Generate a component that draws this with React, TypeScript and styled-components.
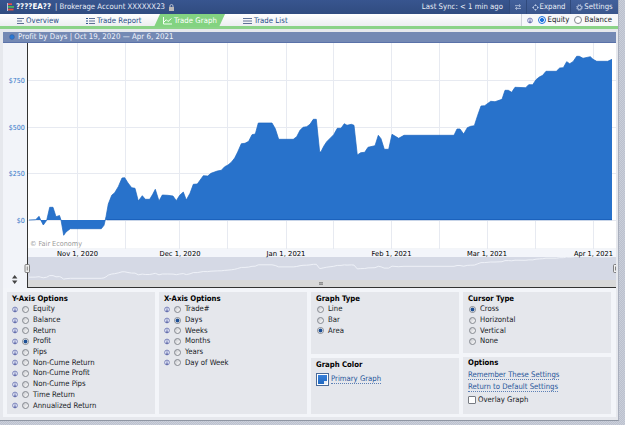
import type { ReactNode } from 'react';
import styled, { createGlobalStyle } from 'styled-components';

const GlobalStyle = createGlobalStyle`
  * {
    box-sizing: border-box;
  }

  body {
    margin: 0;
    overflow: hidden;
    background: conic-gradient(#bcc1ce 25%, #cacfda 0 50%, #bcc1ce 0 75%, #cacfda 0)
      0 0 / 2px 2px;
    color: #15181d;
    font-family: 'DejaVu Sans Condensed', 'DejaVu Sans', sans-serif;
    font-stretch: condensed;
    font-size: 7.7px;
    line-height: 10px;
    white-space: nowrap;
  }
`;

const Page = styled.div`
  width: 625px;
  height: 425px;
  overflow: hidden;
`;

const Window = styled.main`
  display: flex;
  flex-direction: column;
  width: 619px;
  height: 421px;
  border-right: 1px solid #a9afbd;
  border-bottom: 1px solid #8f96a3;
  background: #e6e8ed;
`;

const Header = styled.header`
  display: flex;
  align-items: center;
  height: 14px;
  flex: none;
  padding-left: 7px;
  background: linear-gradient(#38558f, #304c80);
  color: #e9eef8;
`;

const AccountName = styled.b`
  width: 39px;
  margin-left: 2px;
  color: #fff;
  font-size: 7.9px;
`;

const Account = styled.span`
  width: 114px;
  letter-spacing: 0.02px;
`;

const Sync = styled.span`
  margin-left: auto;
  padding-right: 6px;
  letter-spacing: 0.03px;
`;

const HeaderAction = styled.button<{ $width: number }>`
  display: flex;
  align-items: center;
  justify-content: center;
  gap: 1px;
  width: ${({ $width }) => $width}px;
  height: 14px;
  padding: 0;
  border: 0;
  border-left: 1px solid #304a7c;
  background: linear-gradient(#42609b, #3a568c);
  color: #e9eef8;
  font: inherit;
`;

const TabBar = styled.nav`
  display: flex;
  height: 15px;
  flex: none;
  border-bottom: 3px solid #8bd388;
  background: linear-gradient(#fff, #eceef1);
  color: #264c87;
`;

const Tab = styled.a<{ $width: number; $pad: number; $active?: boolean }>`
  display: flex;
  align-items: center;
  gap: 2px;
  width: ${({ $width }) => $width}px;
  height: 13px;
  padding-left: ${({ $pad }) => $pad}px;
  background: ${({ $active }) => ($active ? '#83d381' : 'none')};
  clip-path: ${({ $active }) =>
    $active ? 'polygon(6px 0, 100% 0, calc(100% - 6px) 100%, 0 100%)' : 'none'};
  color: ${({ $active }) => ($active ? '#fff' : 'inherit')};
  letter-spacing: 0.06px;
`;

const Modes = styled.div`
  display: flex;
  align-items: center;
  height: 12px;
  margin-left: auto;
  padding: 0 6px 0 5px;
  border-left: 1px solid #cfd3da;
  background: #f7f8fa;
  color: #15181d;
`;

const ModeLabel = styled.label`
  display: flex;
  align-items: center;
  gap: 2px;
  margin-left: 5px;
`;

const TitleBar = styled.h1`
  display: flex;
  align-items: center;
  gap: 3px;
  height: 11px;
  flex: none;
  margin: 3px 2px 0 3px;
  padding-left: 6px;
  border-bottom: 1px solid #5a72a9;
  background: #7489b4;
  color: #f1f4fb;
  font-size: 7.8px;
  font-weight: 400;
  letter-spacing: 0.04px;
`;

const ChartArea = styled.section`
  height: 245px;
  flex: none;
  margin: 0 2px 0 3px;
  background: #fff;

  svg {
    display: block;
  }
`;

const OptionsArea = styled.section`
  display: grid;
  grid-template-columns: repeat(4, 148px);
  column-gap: 4px;
  height: 129px;
  flex: none;
  margin: 0 2px 0 3px;
  padding: 4px 5px 3px 4px;
  background: #f3f5f9;
`;

const Column = styled.div`
  display: flex;
  flex-direction: column;
  gap: 4px;
`;

const Panel = styled.section<{ $height?: number; $top?: number }>`
  ${({ $height }) => ($height ? `height: ${$height}px;` : 'flex: 1;')}
  padding: ${({ $top = 1 }) => $top}px 5px 0;
  background: #e5e7ec;
`;

const PanelTitle = styled.h2`
  height: 11px;
  margin: 0;
  color: #000;
  font-size: 7.7px;
  line-height: 11px;
`;

const Option = styled.label`
  display: flex;
  align-items: center;
  height: 10.7px;
`;

const RadioDot = styled.span<{ $checked?: boolean; $blue?: boolean }>`
  display: block;
  width: ${({ $blue }) => ($blue ? 8 : 7)}px;
  height: ${({ $blue }) => ($blue ? 8 : 7)}px;
  margin: ${({ $blue }) => ($blue ? '0' : '0 4px 0 1px')};
  border: 1px solid ${({ $blue, $checked }) => ($blue && $checked ? '#1d72dd' : '#858990')};
  border-radius: 50%;
  background: ${({ $checked, $blue }) =>
    $checked
      ? `radial-gradient(circle, ${$blue ? '#1d72dd' : '#1d4f94'} 0 1.6px, #f6f7f9 2.3px)`
      : $blue
        ? '#fff'
        : 'linear-gradient(135deg, #c4c6cc, #fff)'};
`;

const SettingLink = styled.a`
  display: block;
  width: fit-content;
  height: 9px;
  margin-bottom: 3px;
  border-bottom: 1px dotted #5d80b5;
  color: #28569a;
  font-size: 7.7px;
  line-height: 8px;
`;

const Links = styled.div`
  padding-top: 3px;
`;

const ColorRow = styled.div`
  display: flex;
  align-items: center;
  gap: 2px;
  margin-top: 3px;

  ${SettingLink} {
    margin: 0;
  }
`;

const Swatch = styled.span`
  display: flex;
  align-items: flex-end;
  justify-content: flex-end;
  width: 13px;
  height: 13px;
  padding: 1px;
  border: 1px solid #4b6b99;
  background: linear-gradient(#3b82dc, #1c65bd);
  box-shadow: inset 0 0 0 1px #fff;

  &::after {
    width: 3px;
    height: 3px;
    background: #e7edf5;
    content: '';
  }
`;

const Check = styled.span`
  width: 8px;
  height: 8px;
  margin-right: 2px;
  border: 1px solid #777b82;
  border-radius: 1px;
  background: #fff;
`;

const InfoIcon = () => (
  <svg width="6" height="7" viewBox="0 0 6 7">
    <circle cx="3" cy="3.5" r="2.4" fill="#e4e8f8" stroke="#747db7" strokeWidth="0.9" />
    <path d="M3 1.8v.8M3 3.2v2M2.2 5.2h1.6" stroke="#38458f" strokeWidth="0.8" />
  </svg>
);

const ListIcon = ({ bullets, width = 9 }: { bullets?: boolean; width?: number }) => (
  <svg width={width} height="8" viewBox={`0 0 ${width} 8`} stroke="#5e7096">
    <path d={bullets ? 'M3 1.5h6M3 4h6M3 6.5h6' : `M0 1.5h${width}M0 4h${width === 7 ? 5 : 9}M0 6.5h${width}`} />
    {bullets && <path d="M0 1.5h2M0 4h2M0 6.5h2" stroke="#31568f" />}
  </svg>
);

const points: [number, number][] = [
  [29, 220], [35.7, 219.7], [39, 216.3], [40.7, 220], [43.3, 225], [46.7, 220.3],
  [49.7, 207.3], [53, 207.3], [56, 216.7], [59.5, 215.5], [61, 220], [63.7, 235.3],
  [66, 232], [70.3, 228.7], [101.3, 228.7], [104, 225.3], [106, 216.7], [108.3, 204],
  [111.7, 195.3], [114.7, 192.7], [118.3, 186.7], [122, 178], [124.7, 177.7],
  [128, 183], [131.7, 187.7], [135, 188.3], [138.3, 201], [142.3, 195.7],
  [145.3, 199.3], [149.7, 199.3], [152.7, 194.3], [155.3, 189.3], [159, 201],
  [162.3, 195], [167.7, 195.3], [173, 196], [176.3, 200.7], [179.7, 195.3],
  [183.3, 192], [186.3, 200], [190, 193.3], [193.3, 184.3], [197.3, 184],
  [203.3, 175.7], [207.7, 176], [211, 173.3], [217.3, 171], [221.3, 170.3],
  [224.7, 166.7], [228, 165], [231.3, 162.3], [234.7, 158], [237.7, 152],
  [241.3, 143.7], [245, 143.3], [248.7, 141.3], [252, 134.7], [255.3, 134],
  [258.3, 123], [272, 123], [275.3, 128.7], [278.7, 139.3], [293.3, 139.3],
  [296.7, 136.7], [300, 130.3], [303, 127.3], [306.7, 126.7], [310, 124.3],
  [313.3, 119.3], [316.3, 119.3], [319.7, 152.3], [321, 151.7], [323.7, 146.3],
  [326.7, 141.7], [333.7, 134.7], [337.3, 128.3], [341, 128.3], [344.3, 123.7],
  [347, 125.3], [351.3, 124.3], [354, 125.3], [357.3, 155], [360.7, 152.7],
  [364.7, 152.3], [368, 147.3], [375, 145.7], [378.3, 135.3], [381, 138.7],
  [384.3, 149.3], [388.7, 149.3], [392, 134.3], [398.7, 138.3], [404, 135.3],
  [454, 135.3], [457, 129], [460, 129], [463.7, 134], [467.3, 127.7], [470.7, 126.3],
  [474.3, 125.7], [477.7, 115.3], [481, 106], [484.7, 105.7], [490.7, 101.3],
  [495, 101.7], [502, 99.3], [505, 90.3], [508.3, 90.3], [511.7, 92.3], [515, 87.3],
  [525.7, 87.7], [528.7, 84.7], [532.7, 84.7], [536, 79.7], [539.3, 77],
  [542.7, 75.3], [546, 71.3], [556.3, 71.3], [559.7, 68], [563.3, 67.7],
  [566.7, 61.7], [569.7, 63.7], [573, 61.7], [576.7, 56.3], [579.3, 56.3],
  [583, 58.3], [590.3, 56.7], [593, 59.3], [596.7, 61.3], [607.7, 61.3], [612, 59.3],
];

const gridX = [77.5, 125.5, 179.5, 227.5, 286.5, 333.5, 391.5, 439.5, 487.5, 535.5, 593.5];
const gridY = [80.5, 127.5, 173.5, 220.5, 249];
const yLabels: [string, number, number][] = [
  ['$750', 80.5, 16],
  ['$500', 127.3, 16],
  ['$250', 173.8, 16],
  ['$0', 220, 8],
];
const xLabels: [string, number, number][] = [
  ['Nov 1, 2020', 57, 41],
  ['Dec 1, 2020', 159.5, 41],
  ['Jan 1, 2021', 266.5, 39],
  ['Feb 1, 2021', 371.5, 40],
  ['Mar 1, 2021', 467, 40],
  ['Apr 1, 2021', 574, 39],
];

const linePath = points.map(([x, y]) => `${x},${y}`).join(' ');
const overviewPath = points
  .map(([x, y]) => `${x},${(278.3 + (y - 228.7) * 0.128).toFixed(1)}`)
  .join(' ');

const Chart = () => (
  <svg width="613" height="245" viewBox="3 43 613 245" fontFamily="DejaVu Sans, sans-serif">
    <rect x="3" y="43" width="24" height="245" fill="#f2f4f9" />
    <g stroke="#e7eaf1">
      {gridX.map((x) => (
        <path key={x} d={`M${x} 43V249`} />
      ))}
      {gridY.map((y) => (
        <path key={y} d={`M28 ${y}H616`} />
      ))}
    </g>
    <polygon points={`29,220 ${linePath} 612,220`} fill="#2872cb" />
    <polyline points={linePath} fill="none" stroke="#1b65bf" strokeWidth="0.7" />
    <path d="M107 219.7H612" stroke="#155bb5" strokeWidth="0.8" />
    <rect x="28" y="249" width="588" height="8" fill="#f3f5fa" />
    <rect x="28" y="257" width="588" height="23" fill="#d5d9e5" />
    <rect x="28" y="280" width="588" height="7" fill="#d9d9d9" />
    <clipPath id="overview">
      <rect x="28" y="257" width="588" height="23" />
    </clipPath>
    <polyline
      points={overviewPath}
      clipPath="url(#overview)"
      fill="none"
      stroke="#f5f7fc"
      strokeWidth="0.8"
    />
    <path d="M27.5 43V288M27 287.5H616" stroke="#333" />
    {yLabels.map(([label, y, width]) => (
      <text
        key={label}
        x={24.7 - width}
        y={y + 2.5}
        textLength={width}
        lengthAdjust="spacingAndGlyphs"
        fontSize="7"
        fill="#2f74c8"
      >
        {label}
      </text>
    ))}
    {xLabels.map(([label, x, width]) => (
      <text
        key={label}
        x={x}
        y="255.6"
        textLength={width}
        lengthAdjust="spacingAndGlyphs"
        fontSize="6.8"
        fill="#000"
      >
        {label}
      </text>
    ))}
    <text x="30" y="246" textLength="52" lengthAdjust="spacingAndGlyphs" fontSize="7" fill="#999">
      © Fair Economy
    </text>
    <g fill="#eee" stroke="#666" strokeWidth="0.8">
      <rect x="25" y="264.5" width="4.5" height="8" rx="1" />
      <rect x="613.5" y="264.5" width="4.5" height="8" rx="1" />
      <path d="M27.3 266.5v4M615.5 266.5v4" />
    </g>
    <path d="M12 278.5l2.7-3.5 2.7 3.5zM12 280.5l2.7 3.5 2.7-3.5z" fill="#444" />
    <rect x="319" y="282" width="4" height="3" fill="#aaa" />
    <path d="M319 282.5h4M319 284.5h4" stroke="#888" strokeWidth="0.8" />
  </svg>
);

type RadioPanelProps = {
  title: string;
  options: string[];
  selected: string;
  info?: boolean;
  height?: number;
};

const Spacer = styled.span`
  width: 3px;
`;

const RadioPanel = ({ title, options, selected, info, height }: RadioPanelProps) => (
  <Panel $height={height}>
    <PanelTitle>{title}</PanelTitle>
    {options.map((name) => (
      <Option key={name}>
        {info && (
          <>
            <InfoIcon />
            <Spacer />
          </>
        )}
        <RadioDot $checked={name === selected} />
        {name}
      </Option>
    ))}
  </Panel>
);

const Mode = ({ checked, children }: { checked?: boolean; children: ReactNode }) => (
  <ModeLabel>
    <RadioDot $blue $checked={checked} />
    {children}
  </ModeLabel>
);

const App = () => (
  <Page>
    <GlobalStyle />
    <Window>
      <Header>
        <svg width="7" height="8" viewBox="0 0 7 8">
          <path d="M.5 0v8" stroke="#b8c4dc" />
          <path d="M1 1.2h4" stroke="#e84a4a" strokeWidth="1.7" />
          <path d="M1 3.9h6" stroke="#45bb5a" strokeWidth="1.7" />
          <path d="M1 6.6h5.5" stroke="#e8523f" strokeWidth="1.7" />
        </svg>
        <AccountName>????EA??</AccountName>
        <Account>| Brokerage Account XXXXXX23</Account>
        <svg width="5" height="7" viewBox="0 0 5 7">
          <path d="M1 3.5V2a1.5 1.5 0 0 1 3 0v1.5" fill="none" stroke="#c5cbd8" strokeWidth="0.9" />
          <rect y="3" width="5" height="4" fill="#bbb8b8" />
        </svg>
        <Sync>Last Sync: &lt; 1 min ago</Sync>
        <HeaderAction $width={17} aria-label="Sync">
          <svg width="6" height="6" viewBox="0 0 6 6" fill="none" stroke="#c1cde5" strokeWidth="0.8">
            <path d="M0 1.7h5.3M4 .4l1.5 1.3L4 3M6 4.4H.7M2 3.1L.5 4.4 2 5.7" />
          </svg>
        </HeaderAction>
        <HeaderAction $width={44}>
          <svg width="7" height="7" viewBox="0 0 7 7" fill="#b8c8e5">
            <path d="M3.5 0L5 2H2zM3.5 7L2 5h3zM0 3.5L2 2v3zM7 3.5L5 5V2z" />
          </svg>
          Expand
        </HeaderAction>
        <HeaderAction $width={48}>
          <svg width="7" height="7" viewBox="0 0 7 7" fill="none" stroke="#c1cde5">
            <circle cx="3.5" cy="3.5" r="2" />
            <circle cx="3.5" cy="3.5" r="2.9" strokeWidth="0.9" strokeDasharray="1.1 1.18" />
          </svg>
          Settings
        </HeaderAction>
      </Header>
      <TabBar>
        <Tab $width={86} $pad={17}>
          <ListIcon width={7} />
          Overview
        </Tab>
        <Tab $width={68} $pad={0}>
          <ListIcon bullets />
          Trade Report
        </Tab>
        <Tab $width={71} $pad={9} $active>
          <svg width="9" height="8" viewBox="0 0 9 8" fill="none" stroke="#f4fff4">
            <path d="M.5 0v7H9M1 5l2.3-2.3L5 4.5 8.5 1.5" />
          </svg>
          Trade Graph
        </Tab>
        <Tab $width={65} $pad={18}>
          <ListIcon />
          Trade List
        </Tab>
        <Modes>
          <InfoIcon />
          <Mode checked>Equity</Mode>
          <Mode>Balance</Mode>
        </Modes>
      </TabBar>
      <TitleBar>
        <svg width="6" height="6" viewBox="0 0 6 6">
          <circle cx="3" cy="3" r="2.4" fill="#2878d5" stroke="#3f5f9a" strokeWidth="0.6" />
        </svg>
        Profit by Days | Oct 19, 2020 — Apr 6, 2021
      </TitleBar>
      <ChartArea>
        <Chart />
      </ChartArea>
      <OptionsArea>
        <Column>
          <RadioPanel
            info
            title="Y-Axis Options"
            selected="Profit"
            options={[
              'Equity',
              'Balance',
              'Return',
              'Profit',
              'Pips',
              'Non-Cume Return',
              'Non-Cume Profit',
              'Non-Cume Pips',
              'Time Return',
              'Annualized Return',
            ]}
          />
        </Column>
        <Column>
          <RadioPanel
            info
            title="X-Axis Options"
            selected="Days"
            options={['Trade#', 'Days', 'Weeks', 'Months', 'Years', 'Day of Week']}
          />
        </Column>
        <Column>
          <RadioPanel title="Graph Type" selected="Area" options={['Line', 'Bar', 'Area']} height={62} />
          <Panel>
            <PanelTitle>Graph Color</PanelTitle>
            <ColorRow>
              <Swatch />
              <SettingLink>Primary Graph</SettingLink>
            </ColorRow>
          </Panel>
        </Column>
        <Column>
          <RadioPanel
            title="Cursor Type"
            selected="Cross"
            options={['Cross', 'Horizontal', 'Vertical', 'None']}
            height={61}
          />
          <Panel $top={0}>
            <PanelTitle>Options</PanelTitle>
            <Links>
              <SettingLink>Remember These Settings</SettingLink>
              <SettingLink>Return to Default Settings</SettingLink>
            </Links>
            <Option>
              <Check />
              Overlay Graph
            </Option>
          </Panel>
        </Column>
      </OptionsArea>
    </Window>
  </Page>
);

export default App;
